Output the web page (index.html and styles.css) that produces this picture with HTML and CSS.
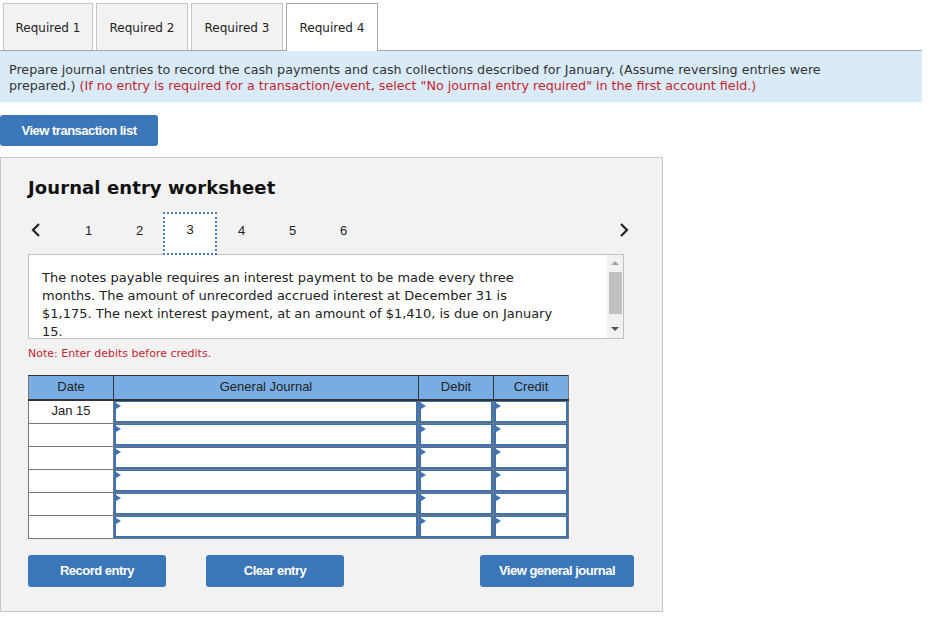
FILE: index.html
```html
<!DOCTYPE html>
<html>
<head>
<meta charset="utf-8">
<link rel="stylesheet" href="styles.css">
</head>
<body>
<div class="page">
  <div class="tabs">
    <div class="tab">Required 1</div>
    <div class="tab">Required 2</div>
    <div class="tab">Required 3</div>
    <div class="tab active">Required 4</div>
  </div>
  <div class="banner"><span>Prepare journal entries to record the cash payments and cash collections described for January. (Assume reversing entries were prepared.)</span> <span class="red">(If no entry is required for a transaction/event, select "No journal entry required" in the first account field.)</span></div>
  <div class="actions"><button class="btn btn-wide">View transaction list</button></div>

  <div class="worksheet">
    <h2 class="title">Journal entry worksheet</h2>
    <div class="nav">
      <div class="arrow prev"><svg width="12" height="16" viewBox="0 0 12 16"><path d="M9 2 L3 8 L9 14" fill="none" stroke="#222" stroke-width="2.2"/></svg></div>
      <div class="num">1</div>
      <div class="num">2</div>
      <div class="num current">3</div>
      <div class="num">4</div>
      <div class="num">5</div>
      <div class="num">6</div>
      <div class="arrow next"><svg width="12" height="16" viewBox="0 0 12 16"><path d="M3 2 L9 8 L3 14" fill="none" stroke="#222" stroke-width="2.2"/></svg></div>
    </div>
    <div class="desc">
      <div class="desc-text">The notes payable requires an interest payment to be made every three months. The amount of unrecorded accrued interest at December 31 is $1,175. The next interest payment, at an amount of $1,410, is due on January 15.</div>
      <div class="scroll">
        <div class="sarrow up"></div>
        <div class="thumb"></div>
        <div class="sarrow down"></div>
      </div>
    </div>
    <div class="note">Note: Enter debits before credits.</div>

    <table class="journal">
      <thead>
        <tr><th class="c-date">Date</th><th class="c-acct">General Journal</th><th class="c-amt">Debit</th><th class="c-amt">Credit</th></tr>
      </thead>
      <tbody>
        <tr><td class="date">Jan 15</td><td><div class="inp"></div></td><td><div class="inp"></div></td><td><div class="inp"></div></td></tr>
        <tr><td class="date"></td><td><div class="inp"></div></td><td><div class="inp"></div></td><td><div class="inp"></div></td></tr>
        <tr><td class="date"></td><td><div class="inp"></div></td><td><div class="inp"></div></td><td><div class="inp"></div></td></tr>
        <tr><td class="date"></td><td><div class="inp"></div></td><td><div class="inp"></div></td><td><div class="inp"></div></td></tr>
        <tr><td class="date"></td><td><div class="inp"></div></td><td><div class="inp"></div></td><td><div class="inp"></div></td></tr>
        <tr><td class="date"></td><td><div class="inp"></div></td><td><div class="inp"></div></td><td><div class="inp"></div></td></tr>
      </tbody>
    </table>

    <div class="bottom">
      <button class="btn b-record">Record entry</button>
      <button class="btn b-clear">Clear entry</button>
      <button class="btn b-view">View general journal</button>
    </div>
  </div>
</div>
</body>
</html>
```

FILE: styles.css
```css
* { box-sizing: border-box; }
html, body { margin: 0; padding: 0; background: #fff; }
body { font-family: "DejaVu Sans", Verdana, sans-serif; color: #222; }
.page { width: 922px; }

.tabs {
  display: flex;
  gap: 3px;
  padding: 3px 0 0 3px;
  border-bottom: 1px solid #a6a6a6;
  height: 51px;
}
.tab {
  width: 90px;
  height: 47px;
  background: #f2f2f2;
  border: 1px solid #c6c6c6;
  border-bottom: none;
  font-size: 12px;
  color: #222;
  display: flex;
  align-items: center;
  justify-content: center;
  padding-top: 1px;
}
.tab:nth-child(2) { width: 92px; }
.tab:nth-child(3) { width: 92px; }
.tab.active {
  width: 92px;
  height: 48px;
  background: #fff;
  border-color: #a6a6a6;
  position: relative;
  z-index: 1;
}

.banner {
  background: #d9eaf8;
  padding: 11px 60px 8px 9px;
  font-size: 12.7px;
  line-height: 16px;
  color: #333;
}
.red { color: #c4262e; }

.actions { padding-top: 13px; }
.btn {
  background: #3b76b8;
  color: #fff;
  border: none;
  border-radius: 3px;
  font-family: "Liberation Sans Narrow", "Liberation Sans", Arial, sans-serif;
  font-weight: bold;
  font-size: 13px;
  letter-spacing: -0.5px;
  height: 32px;
  padding: 0;
  margin: 0;
}
.btn-wide { width: 158px; height: 31px; }

.worksheet {
  margin-top: 11px;
  width: 663px;
  background: #f2f2f2;
  border: 1px solid #c8c8c8;
  padding: 19px 38px 24px 27px;
}
.title {
  margin: 0;
  font-size: 18px;
  line-height: 22px;
  font-weight: bold;
  color: #111;
  letter-spacing: 0.1px;
}
.nav {
  display: flex;
  align-items: stretch;
  height: 43px;
  margin-top: 13px;
}
.arrow { display: flex; align-items: center; padding-bottom: 7px; }
.prev { width: 35px; padding-left: 2px; }
.next { margin-left: auto; margin-right: -6px; }
.num {
  width: 51px;
  display: flex;
  align-items: center;
  justify-content: center;
  font-family: "Liberation Sans", Arial, sans-serif;
  font-size: 13px;
  color: #222;
  padding-bottom: 7px;
}
.num.current {
  width: 54px;
  margin: 0 -1px 0 -2px;
  background: #fff;
  border: 2px dotted #4a7cc0;
  padding-bottom: 8px;
  position: relative;
  z-index: 2;
}

.desc {
  position: relative;
  height: 85px;
  background: #fff;
  border: 1px solid #c0c0c0;
  margin-top: -1px;
  overflow: hidden;
  display: flex;
}
.desc-text {
  flex: 1;
  padding: 14px 51px 0 13px;
  font-size: 13px;
  line-height: 18px;
  color: #222;
}
.scroll {
  width: 16px;
  background: #f1f1f1;
  display: flex;
  flex-direction: column;
  align-items: center;
}
.sarrow { width: 0; height: 0; border-left: 4px solid transparent; border-right: 4px solid transparent; }
.sarrow.up { border-bottom: 4px solid #a3a3a3; margin-top: 6px; }
.sarrow.down { border-top: 4px solid #505050; margin-top: auto; margin-bottom: 7px; }
.thumb { width: 13px; height: 42px; background: #c1c1c1; margin-top: 7px; }

.note {
  font-size: 11px;
  color: #c4262e;
  margin-top: 8px;
  line-height: 14px;
}

.journal {
  margin-top: 14px;
  border-collapse: collapse;
  border: 1px solid #777;
  font-family: "Liberation Sans", Arial, sans-serif;
  font-size: 13px;
}
.journal th {
  background: #77ade3;
  border: 1px solid #333;
  border-bottom: 2px solid #333;
  height: 24px;
  font-weight: normal;
  color: #222;
  padding: 0 0 1px 0;
}
.journal th:first-child { border-left-color: #777; }
.journal th:last-child { border-right-color: #777; }
.c-date { width: 85px; }
.c-acct { width: 305px; }
.c-amt { width: 75px; }
.journal td {
  border: 1px solid #777;
  height: 23px;
  padding: 0;
  background: #fff;
}
.journal td.date {
  text-align: center;
  color: #222;
  vertical-align: middle;
  padding-bottom: 2px;
}
.inp {
  position: relative;
  height: 22px;
  border: 2px solid #3d72b4;
  border-top-width: 1px;
  background: #fff;
}
.inp::before {
  content: "";
  position: absolute;
  left: 0;
  top: 1px;
  border-left: 5px solid #3d72b4;
  border-top: 3px solid transparent;
  border-bottom: 3px solid transparent;
}

.bottom {
  display: flex;
  margin-top: 16px;
}
.b-record { width: 138px; }
.b-clear { width: 138px; margin-left: 40px; }
.b-view { width: 154px; margin-left: auto; margin-right: -10px; }
```
